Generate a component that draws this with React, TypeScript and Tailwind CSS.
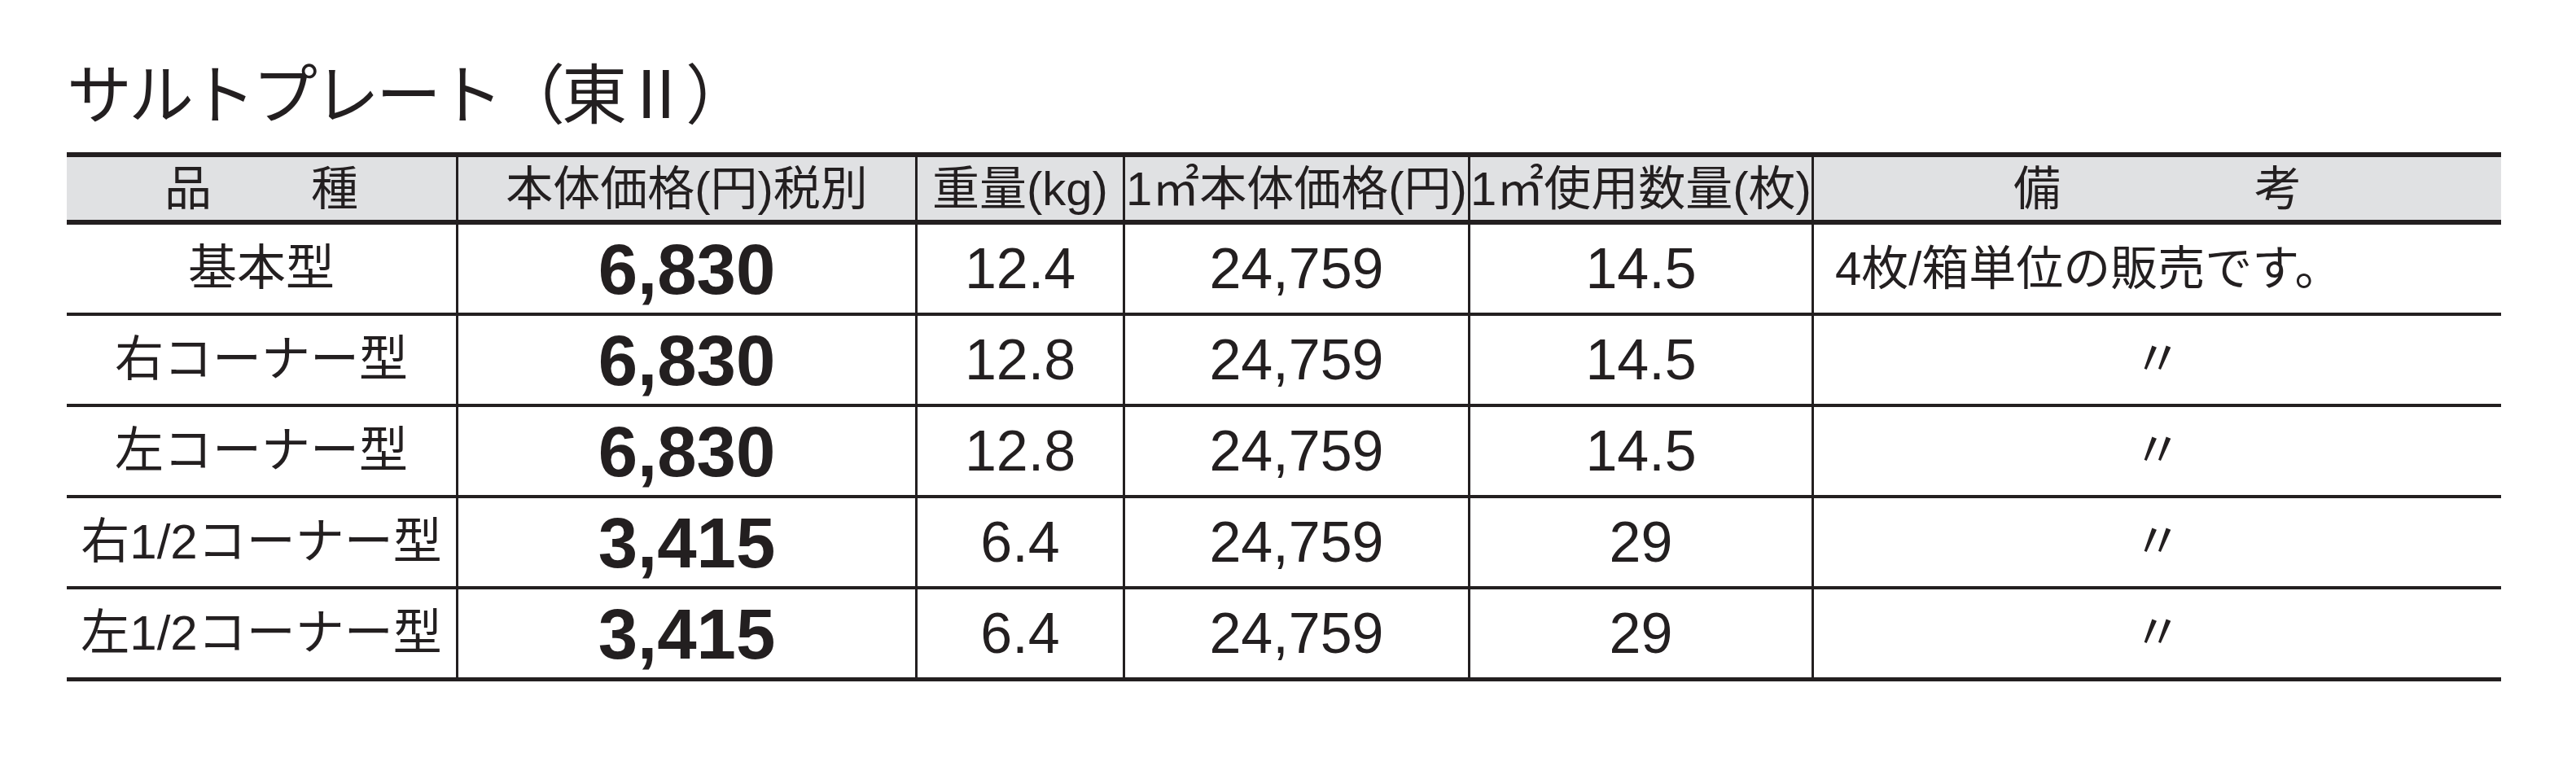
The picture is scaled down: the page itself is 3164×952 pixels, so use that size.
import React from "react";

const rows = [
  { name: "基本型", price: "6,830", weight: "12.4", perM2: "24,759", qty: "14.5", note: "4枚/箱単位の販売です。" },
  { name: "右コーナー型", price: "6,830", weight: "12.8", perM2: "24,759", qty: "14.5", note: "〃" },
  { name: "左コーナー型", price: "6,830", weight: "12.8", perM2: "24,759", qty: "14.5", note: "〃" },
  { name: "右1/2コーナー型", price: "3,415", weight: "6.4", perM2: "24,759", qty: "29", note: "〃" },
  { name: "左1/2コーナー型", price: "3,415", weight: "6.4", perM2: "24,759", qty: "29", note: "〃" },
];

const cell = "flex items-center justify-center border-l-[3px] border-[#231f20]";

export default function App() {
  return (
    <div
      className="w-[3164px] h-[952px] bg-white text-[#231f20] pl-[82px] pt-[70px]"
      style={{ fontFamily: "'Liberation Sans', 'Noto Sans CJK JP', sans-serif" }}
    >
      {/* Title */}
      <h1
        className="text-[80px] leading-none h-[80px] font-normal tracking-[-4px]"
        style={{ fontFamily: "'Noto Sans CJK JP', sans-serif" }}
      >
        サルトプレート（東Ⅱ）
      </h1>

      {/* Table */}
      <div className="mt-[37px] w-[2990px]">
        {/* Header */}
        <div className="grid grid-cols-[478px_564px_255px_424px_422px_847px] h-[89px] border-y-[6px] border-[#231f20] bg-[#e0e1e3] text-[58px] leading-none">
          <div className="flex items-center justify-center gap-[122px]">
            <span>品</span>
            <span>種</span>
          </div>
          <div className={cell}>本体価格(円)税別</div>
          <div className={cell}>重量(kg)</div>
          <div className={cell}>1㎡本体価格(円)</div>
          <div className={cell}>1㎡使用数量(枚)</div>
          <div className={`${cell} gap-[238px]`}>
            <span>備</span>
            <span>考</span>
          </div>
        </div>

        {/* Rows */}
        {rows.map((r, i) => (
          <div
            key={r.name}
            className={
              i === rows.length - 1
                ? "grid grid-cols-[478px_564px_255px_424px_422px_847px] h-[113px] border-b-[5px] border-[#231f20] leading-none"
                : "grid grid-cols-[478px_564px_255px_424px_422px_847px] h-[112px] border-b-4 border-[#231f20] leading-none"
            }
          >
            <div className="flex items-center justify-center text-[60px]">{r.name}</div>
            <div className={`${cell} text-[87px] font-bold`}>{r.price}</div>
            <div className={`${cell} text-[70px]`}>{r.weight}</div>
            <div className={`${cell} text-[70px]`}>{r.perM2}</div>
            <div className={`${cell} text-[70px]`}>{r.qty}</div>
            {i === 0 ? (
              <div className="flex items-center border-l-[3px] border-[#231f20] pl-[26px] text-[58px]">{r.note}</div>
            ) : (
              <div className={`${cell} text-[60px]`}>{r.note}</div>
            )}
          </div>
        ))}
      </div>
    </div>
  );
}
